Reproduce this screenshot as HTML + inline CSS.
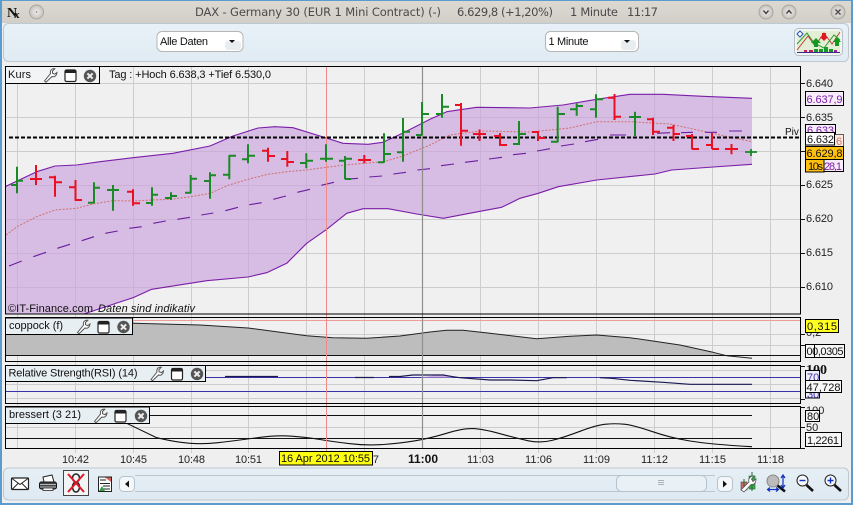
<!DOCTYPE html>
<html><head><meta charset="utf-8"><title>DAX</title>
<style>
html,body{margin:0;padding:0;width:853px;height:505px;overflow:hidden;background:#efefef}
svg{display:block}
text{font-family:"Liberation Sans",sans-serif;font-size:11px;fill:#111}
.t{font-family:"DejaVu Sans",sans-serif;font-size:11.5px;fill:#4a4a4a}
.a{font-size:11px;fill:#222}
</style></head><body>
<svg width="853" height="505" viewBox="0 0 853 505" xmlns="http://www.w3.org/2000/svg">
<defs>
<linearGradient id="tb" x1="0" y1="0" x2="0" y2="1"><stop offset="0" stop-color="#e8f1f8"/><stop offset="1" stop-color="#e0ebf3"/></linearGradient>
<linearGradient id="bb" x1="0" y1="0" x2="0" y2="1"><stop offset="0" stop-color="#e6eff6"/><stop offset="1" stop-color="#dfe9f1"/></linearGradient>
<linearGradient id="tt" x1="0" y1="0" x2="0" y2="1"><stop offset="0" stop-color="#dcd8d2"/><stop offset="1" stop-color="#d2cec8"/></linearGradient>
<radialGradient id="btn"><stop offset="0" stop-color="#eeeeee"/><stop offset="1" stop-color="#c6c2bc"/></radialGradient>
<clipPath id="c1"><rect x="6" y="66" width="794" height="248"/></clipPath>
<g id="wr"><path d="M-6 6L-4.500 7.200L1.500 1.500C3.800 2.300 6.200 .8 6.500-2.500L4.300-.8L2-1.800L2-4L4.300-6.300C1.300-6.800-.7-4.500 0-1.500Z" fill="#fff" stroke="#555" stroke-width="1"/></g>
<g id="wn"><rect x="-5.500" y="-5.500" width="11" height="11.500" rx="1.500" fill="#fff" stroke="#222" stroke-width="1.200"/><rect x="-5.500" y="-5.500" width="11" height="3" fill="#222"/></g>
<g id="cl"><circle r="6.200" fill="#555"/><path d="M-2.600-2.600L2.600 2.600M2.600-2.600L-2.600 2.600" stroke="#eee" stroke-width="2"/></g>
</defs>

<!-- window frame -->
<rect width="853" height="505" fill="#5a9bd0"/>
<rect x="2" y="1" width="849" height="502" fill="#efefef"/>
<rect x="2" y="1" width="849" height="22" fill="url(#tt)"/>
<text x="7" y="17" style="font-family:'Liberation Serif',serif;font-weight:bold;font-size:14px;fill:#111">N</text><text x="14" y="18" style="font-family:'Liberation Serif',serif;font-weight:bold;font-size:11px;fill:#111">x</text>
<circle cx="36.500" cy="12" r="7" fill="url(#btn)" stroke="#aaa6a0"/>
<circle cx="36.500" cy="12" r=".8" fill="#777"/>
<text class="t" x="195" y="16" textLength="246">DAX - Germany 30 (EUR 1 Mini Contract) (-)</text>
<text class="t" x="457" y="16" textLength="96">6.629,8 (+1,20%)</text>
<text class="t" x="570" y="16" textLength="48">1 Minute</text>
<text class="t" x="627" y="16" textLength="31">11:17</text>
<g fill="url(#btn)" stroke="#aaa6a0"><circle cx="766" cy="12" r="7"/><circle cx="789" cy="12" r="7"/><circle cx="838" cy="12" r="7"/></g>
<path d="M763.500 10.500L766 13.500L768.500 10.500M786.500 13.500L789 10.500L791.500 13.500M835.500 9.500L840.500 14.500M840.500 9.500L835.500 14.500" fill="none" stroke="#444" stroke-width="1.400"/>

<!-- top toolbar -->
<rect x="3.500" y="23.500" width="845" height="38" rx="5" fill="url(#tb)" stroke="#bcc8d2"/>
<rect x="157" y="31.500" width="86" height="20" rx="5" fill="#fff" stroke="#b6b6b6"/>
<rect x="225" y="41" width="16" height="9" rx="3" fill="#e8edf0"/>
<text x="160" y="45" textLength="48">Alle Daten</text>
<path d="M229 40H235L232 43Z" fill="#111"/>
<rect x="545.500" y="31.500" width="93" height="20" rx="5" fill="#fff" stroke="#b6b6b6"/>
<rect x="621" y="40" width="15" height="10" rx="3" fill="#e8edf0"/>
<text x="548.500" y="45" textLength="40">1 Minute</text>
<path d="M624 40H630L627 43Z" fill="#111"/>
<!-- strategy icon -->
<rect x="794.500" y="28.500" width="48" height="27" rx="4" fill="#f2f6f2" stroke="#b4bec4"/>
<rect x="797" y="31" width="43" height="21" fill="#dcedc8" opacity=".7"/>
<path d="M797 50L808 36L815 46L824 33L832 44L840 32" fill="none" stroke="#c8403a" stroke-width="1"/>
<path d="M797 44L807 33L814 43L824 48L834 35L840 40" fill="none" stroke="#2e9a2e" stroke-width="1"/>
<path d="M800 31L803 34L800 37L797 34Z" fill="#fff" stroke="#2a50c0"/>
<path d="M814 47H818V43H821L816 38L811 43H814ZM835 46H839V42H841L837 37L833 42H835Z" fill="#129a20"/>
<path d="M822 33H826V37H828L824 41L820 37H822Z" fill="#e01820"/>
<path d="M797 52.500H840" stroke="#3a2a90" stroke-width="1"/>
<path d="M804 50h3v2h-3zM809 50h4v2h-4z" fill="#d02060"/><path d="M814 49h4v3h-4zM819 49h4v3h-4zM824 47h4v5h-4z" fill="#189a28"/><path d="M829 49h4v3h-4z" fill="#189a28"/><path d="M834 50h3v2h-3z" fill="#a020a0"/>

<!-- chart backgrounds -->
<rect x="5.500" y="66.500" width="795" height="248" fill="#f0f0f0"/>
<rect x="5.500" y="317.500" width="795" height="44" fill="#f0f0f0"/>
<rect x="5.500" y="365.500" width="795" height="38" fill="#f0f0f0"/>
<rect x="5.500" y="407" width="795" height="41" fill="#f0f0f0"/>

<!-- grids -->
<path d="M6 83.500H800M6 117.500H800M6 151.500H800M6 185.500H800M6 219.500H800M6 253.500H800M6 287.500H800M6 334.500H800M6 345.500H800M6 370.500H800M6 384.500H800M6 398.500H800M6 427.500H800" stroke="#cdcdcd" stroke-width="1" fill="none"/>
<path d="M17.500 66V448M75.500 66V453M133.500 66V453M191.500 66V453M248.500 66V453M306.500 66V453M364.500 66V453M480.500 66V453M538.500 66V453M596.500 66V453M654.500 66V453M712.500 66V453M770.500 66V453" stroke="#cdcdcd" stroke-width="1" fill="none"/>

<!-- band -->
<g clip-path="url(#c1)">
<path d="M5 186.700L36.700 171.700L55 166L76.700 165L100 161.700L133 157.700L173 153.300L210 146L233 136L258 128L275 126.700L293 127.700L320 136L343 143.300L368 144.300L383 142.300L403 133L430 119.300L446.700 111.700L476.700 107.300L530 108L563 105L596.700 99.300L630 94.300L663 94.300L703 96.300L752 98.300L752 164.300L713.300 167L671.700 170L655 174L596.700 180L558.300 186.700L538.300 193.300L520 198.300L501.700 207.300L480 211.300L443.300 218.300L416.700 214L388 208.700L363.300 208.700L346.700 213.300L326.700 229.300L306.700 243.300L286.700 263.300L266.700 272.700L248 277L206.700 280.700L190 283.300L151.700 289.300L133 297.700L86.700 313L70 320L5 320Z" fill="#c9a0dc" fill-opacity=".65"/>
<path d="M5 186.700L36.700 171.700L55 166L76.700 165L100 161.700L133 157.700L173 153.300L210 146L233 136L258 128L275 126.700L293 127.700L320 136L343 143.300L368 144.300L383 142.300L403 133L430 119.300L446.700 111.700L476.700 107.300L530 108L563 105L596.700 99.300L630 94.300L663 94.300L703 96.300L752 98.300" fill="none" stroke="#7a1ea8" stroke-width="1.100" stroke-linejoin="round"/>
<path d="M752 164.300L713.300 167L671.700 170L655 174L596.700 180L558.300 186.700L538.300 193.300L520 198.300L501.700 207.300L480 211.300L443.300 218.300L416.700 214L388 208.700L363.300 208.700L346.700 213.300L326.700 229.300L306.700 243.300L286.700 263.300L266.700 272.700L248 277L206.700 280.700L190 283.300L151.700 289.300L133 297.700L86.700 313L70 320" fill="none" stroke="#7a1ea8" stroke-width="1.100" stroke-linejoin="round"/>
<!-- red dotted MA -->
<path d="M6 235L17 226.700L36.700 216.700L55 210L76.700 208.300L93 204L113 200.700L133 201L152 200L171 199.300L190.700 196.700L210 193.300L229 185L248 179.300L268 174.300L287 171.700L306 170L326 167.300L345 165L364 163.300L384 161.700L403 156L430 145L450 135L480 131L530 132L570 128L596.700 121.700L630 121.700L670 124L693 129L720 135L752 141.700" fill="none" stroke="#d0706c" stroke-width="1" stroke-dasharray="2 1.500"/>
<!-- purple dashes -->
<path d="M9 266L21.700 261M33.300 256.700L46 252.300M57.300 248.300L70 244.300M81.700 240.700L94 236.700M105.300 233.300L117.700 231M129.300 228.300L141.700 226.700M153.300 223.300L165.700 221M177.300 219.300L190 217.300M201.300 215L213.300 213M225.300 210.700L238 207.300M249.300 204.700L261.700 202.700M273.300 199.300L286 196M297.300 192.300L310 189.300M321.300 185.300L334 182.300M345.300 179.300L358 178.300M369.300 177L382 176M393.300 174L406 172.300M417.300 170L430 168.700M441 165.700L454 164M465 162.300L478 160.700M489 159L502 157.300M513 154.700L526 153.300M537 151L550 148.700M561 146L574 144M585 141.700L598 139.300M610 135L626 135M657 133.300L670 132.700M681 132.700L693 132.300M705 132.300L717 132.300M729 131L742 131" fill="none" stroke="#6a1ea0" stroke-width="1.100"/>
</g>

<!-- coppock fill -->
<path d="M6 321L133 323.300L200 325L248 328L306.700 335.700L333 337.700L366.700 338.300L400 336L430 332L446.700 330.300L463 330.300L490 333.300L536.700 338.700L570 336.300L596.700 335L630 337.700L680 345L713 352.300L726.700 355.700L6 355.700Z" fill="#bdbdbd"/>
<path d="M133 323.300L200 325L248 328L306.700 335.700L333 337.700L366.700 338.300L400 336L430 332L446.700 330.300L463 330.300L490 333.300L536.700 338.700L570 336.300L596.700 335L630 337.700L680 345L713 352.300L726.700 355.700L752 358.300" fill="none" stroke="#222" stroke-width="1" stroke-linejoin="round"/>
<path d="M6 320.500H800" stroke="#f09a9a" stroke-width="1"/>
<path d="M6 355.500H800" stroke="#111" stroke-width="1"/>

<!-- RSI -->
<path d="M6 377.500H800M6 391.500H800" stroke="#3a32a8" stroke-width="1"/>
<path d="M420 377.500L443 374.300L453 377.500Z" fill="#d0b0e0" stroke="none"/>
<path d="M225 376.500H278M355 377.500H374M389 376.500H400L413 375H443L453 376.700L460 377.700L490 380L510 380L536.700 380.700L553 377.700L566.700 377.700M600 377.700L611.700 378.300L630 380.300L663 382.300L690 384.300L752 384.300" fill="none" stroke="#1a1a50" stroke-width="1.200" stroke-linejoin="round"/>

<!-- bressert -->
<path d="M150 415.500H752M6 438.500H752" stroke="#111" stroke-width="1"/>
<path d="M126.700 423.300L156.700 437.700Q176.700 442.300 190 443.300Q203 444.300 218 442.700Q233 441 255 438Q276.700 435 291.700 436.200Q306.700 437.300 320 439.500Q333 441.700 350 443.700Q366.700 445.700 383.300 444.500Q400 443.300 415 440.800Q430 438.300 446.500 433.300Q463 428.300 473 428.600Q483 429 500 433.700Q516.700 438.300 528.300 440.800Q540 443.300 551.500 440.500Q563 437.700 580 431.300Q596.700 425 606 424.200Q615 423.300 624 424.200Q633 425 651.500 431.300Q670 437.700 690 441Q710 444.300 752 446.700" fill="none" stroke="#111" stroke-width="1.100"/>

<!-- crosshair verticals -->
<path d="M326.500 66V452" stroke="#ee8a8a" stroke-width="1"/>
<path d="M422.500 66V448" stroke="#8e8e8e" stroke-width="1.200"/>

<!-- pivot -->
<path d="M9 137.500H800" stroke="#000" stroke-width="2" stroke-dasharray="4 2"/>
<text x="785" y="135" style="font-size:10px">Piv</text>

<!-- bars green -->
<path d="M17 166.700V193.300M11 185H17M17 180.700H23M94 182.300V203.300M88 202.700H94M94 187.700H100M113 185V210.700M107 190H119M152 187.300V205.700M146 203H152M152 194.700H158M171 192.300V200M165 198H171M171 196H177M190.700 175V193.300M185 192.700H191M191 178.700H197M210 172.300V198.700M204 181H210M210 175.300H216M229.300 155.300V179.300M223 174.700H229M229 155.700H236M248 144.300V163.300M242 159.300H248M248 155.700H255M306.300 153.300V168.300M300 163H306M306 160.700H313M326 144.300V161.700M320 158.700H333M345 156V179.300M339 160.700H345M345 158.700H352M345 179H351M384 133.300V162.700M378 162.300H384M384 154H391M403 118V161.700M397 152.300H403M403 131.700H410M422 102V135M416 135H422M422 114H429M442 94V117.700M436 114H442M442 106.700H449M519 121V145M513 144H519M519 134H526M557.700 106.700V142.300M551 141.700H558M558 114H565M576.700 103.300V115.700M570 109.300H577M577 106H583M596 94.300V117.700M590 109.300H596M596 99.300H603M635 111.700V136M629 117H641" fill="none" stroke="#1a8a26" stroke-width="2"/>
<path d="M751 149V156M745 152H757" fill="none" stroke="#1a8a26" stroke-width="1.800"/>
<!-- bars red -->
<path d="M36 165V185M30 179H42M55 175.700V196.700M49 177.300H55M55 182.300H62M75.500 180V200.700M69 187.300H75M75 200H82M133 189.300V205.700M127 191.700H133M133 203.300H140M268 147.700V161.700M262 150.700H268M268 156H275M287.300 151V166.700M281 159H287M287 162H294M364.300 155V163.300M358 160H371M461 103V145.700M455 105H461M461 130.700H468M479.500 129.500V141M473 134H486M500 133V146M494 136H500M500 145H507M538 131V141M532 132H538M538 138H545M614.500 94V120M608 97.700H615M615 116.700H621M653 117.700V135M647 119.300H653M653 131.700H660M673.500 125V141M667 127.700H674M674 134H680M692 134V149.300M686 136H692M692 149H699M712 133V149M706 145H712M712 149H719M731.500 144V154.300M725 149H738" fill="none" stroke="#ea1022" stroke-width="2"/>

<!-- panel borders -->
<g fill="none" stroke="#000" stroke-width="1">
<rect x="5.500" y="66.500" width="795" height="247.500"/>
<rect x="5.500" y="317.500" width="795" height="44"/>
<rect x="5.500" y="365.500" width="795" height="38"/>
<rect x="5.500" y="406.500" width="795" height="42"/>
</g>

<!-- axis ticks -->
<path d="M800 83.500H805M800 117.500H805M800 151.500H805M800 185.500H805M800 219.500H805M800 253.500H805M800 287.500H805M800 334.500H805M800 345.500H805M800 366.500H805M800 399.500H805M800 407.500H805M800 427.500H805M800 448.500H805" stroke="#111" stroke-width="1"/>

<!-- legends -->
<rect x="5.500" y="66.500" width="94" height="17" fill="#f2f4f5" stroke="#000"/>
<text x="8" y="78" textLength="23">Kurs</text>
<use href="#wr" x="50.500" y="75"/><use href="#wn" x="70.500" y="75.500"/><use href="#cl" x="90" y="76"/>
<text x="109" y="78" textLength="162">Tag : +Hoch 6.638,3 +Tief 6.530,0</text>

<rect x="5.500" y="318" width="127" height="16.500" fill="#e8eff3" stroke="#000"/>
<text x="9" y="329" textLength="54">coppock (f)</text>
<use href="#wr" x="83.500" y="326.500"/><use href="#wn" x="103.500" y="327"/><use href="#cl" x="123.500" y="327"/>

<rect x="5.500" y="365.500" width="200" height="16" fill="#e8eff3" stroke="#000"/>
<text x="8.500" y="376.500" textLength="129">Relative Strength(RSI) (14)</text>
<use href="#wr" x="157" y="373.500"/><use href="#wn" x="177" y="374"/><use href="#cl" x="197" y="374"/>

<rect x="5.500" y="407" width="144" height="16.500" fill="#e8eff3" stroke="#000"/>
<text x="9" y="418" textLength="72">bressert (3 21)</text>
<use href="#wr" x="100.500" y="415.500"/><use href="#wn" x="120.500" y="416"/><use href="#cl" x="141" y="416"/>

<text x="8" y="312" textLength="85">©IT-Finance.com</text>
<text x="98" y="312" style="font-style:italic" textLength="97">Daten sind indikativ</text>

<!-- price axis labels -->
<text class="a" x="806" y="87" textLength="27">6.640</text>
<text class="a" x="806" y="121" textLength="27">6.635</text>
<text class="a" x="806" y="188" textLength="27">6.625</text>
<text class="a" x="806" y="222" textLength="27">6.620</text>
<text class="a" x="806" y="256" textLength="27">6.615</text>
<text class="a" x="806" y="290" textLength="27">6.610</text>
<rect x="805.500" y="91.500" width="38" height="14" fill="#f8ecfb" stroke="#000"/>
<text x="806.500" y="103" style="fill:#7a1ea8" textLength="36">6.637,9</text>
<rect x="805.500" y="124.500" width="30" height="10" fill="#f8ecfb" stroke="#000"/>
<text x="807" y="134" style="fill:#7a1ea8" textLength="27">6.633</text>
<rect x="805.500" y="134.500" width="38" height="12" fill="#fbe8e0" stroke="#000" stroke-width=".6"/>
<text x="836" y="145" style="fill:#d87868">6</text>
<rect x="805.500" y="132.500" width="29" height="12.500" fill="#fff" stroke="#000"/>
<text x="807" y="143" textLength="27">6.632</text>
<rect x="805.500" y="159.500" width="38" height="12" fill="#f8ecfb" stroke="#000"/>
<text x="824" y="170" style="fill:#7a1ea8" textLength="18">28,1</text>
<rect x="805.500" y="146.500" width="38" height="13" fill="#ffc010" stroke="#000"/>
<text x="806.500" y="157" textLength="36">6.629,8</text>
<rect x="805.500" y="159.500" width="18.500" height="12.500" fill="#ffc010" stroke="#000"/>
<text x="808" y="170" textLength="15">10s</text>

<text x="806" y="336" class="a">0,2</text>
<rect x="805.500" y="319.500" width="33" height="13" fill="#ffff20" stroke="#000"/>
<text x="807" y="330" textLength="30">0,315</text>
<rect x="805.500" y="344.500" width="39" height="13" fill="#f6f6f6" stroke="#000"/>
<text x="806.500" y="355" textLength="37">00,0305</text>
<path d="M814.500 345V357" stroke="#000"/>

<text x="806" y="374" style="font-family:'Liberation Serif',serif;font-weight:bold;font-size:14px;fill:#111">100</text>
<rect x="805.500" y="370.500" width="14" height="12" fill="#f0ecf8" stroke="#000"/>
<text x="807" y="381" style="fill:#3a32a8">70</text>
<rect x="805.500" y="390" width="14" height="8" fill="#f0ecf8" stroke="#000"/>
<text x="807" y="398" style="fill:#3a32a8">30</text>
<rect x="805.500" y="380.500" width="36" height="12" fill="#f8f8f8" stroke="#000"/>
<text x="806.500" y="391" textLength="34">47,728</text>

<text x="806" y="414" class="a">100</text>
<rect x="805.500" y="410.500" width="14" height="11" fill="#f6f6f6" stroke="#000"/>
<text x="807" y="420">80</text>
<text x="806" y="431" class="a">50</text>
<rect x="805.500" y="432.500" width="36" height="14" fill="#f6f6f6" stroke="#000"/>
<text x="807" y="444" textLength="32">1,2261</text>

<!-- time axis -->
<text class="a" x="62" y="463" textLength="27">10:42</text>
<text class="a" x="120" y="463" textLength="27">10:45</text>
<text class="a" x="178" y="463" textLength="27">10:48</text>
<text class="a" x="235" y="463" textLength="27">10:51</text>
<text class="a" x="352" y="463" textLength="27">10:57</text>
<text x="408" y="463" style="font-size:12px;font-weight:bold" textLength="30">11:00</text>
<text class="a" x="467" y="463" textLength="27">11:03</text>
<text class="a" x="525" y="463" textLength="27">11:06</text>
<text class="a" x="583" y="463" textLength="27">11:09</text>
<text class="a" x="641" y="463" textLength="27">11:12</text>
<text class="a" x="699" y="463" textLength="27">11:15</text>
<text class="a" x="757" y="463" textLength="27">11:18</text>
<rect x="279.500" y="451.500" width="93" height="13.500" fill="#ffff10" stroke="#000"/>
<text x="281" y="462" textLength="89">16 Apr 2012 10:55</text>

<!-- bottom toolbar -->
<rect x="3.500" y="468" width="845" height="32" rx="5" fill="url(#bb)" stroke="#bcc8d2"/>
<!-- envelope -->
<rect x="11.500" y="478" width="17" height="11.500" rx="1" fill="#fff" stroke="#222" stroke-width="1.200"/>
<path d="M12 478.500L20 484.500L28 478.500M12 489.500L18 483.500M28 489.500L22 483.500" fill="none" stroke="#222"/>
<!-- printer -->
<path d="M43 477L52 475L54 482H44Z" fill="#fff" stroke="#222"/>
<rect x="39.500" y="482" width="17" height="7" rx="2" fill="#444" stroke="#111"/>
<path d="M40 484.500H56M40 487H56" stroke="#ddd" stroke-width=".8"/>
<rect x="43" y="488" width="10" height="2.500" fill="#fff" stroke="#222" stroke-width=".8"/>
<!-- disabled -->
<rect x="63.500" y="470.500" width="25" height="25" fill="#f2f4f5" stroke="#444"/>
<ellipse cx="76" cy="478" rx="3.500" ry="4" fill="none" stroke="#222" stroke-width="1.500"/><ellipse cx="76" cy="487" rx="3.500" ry="5" fill="none" stroke="#222" stroke-width="1.500"/>
<path d="M68 474L84 492M84 474L68 492" stroke="#e01828" stroke-width="2"/>
<!-- doc -->
<rect x="98.500" y="477" width="13" height="14.500" fill="#fff" stroke="#222"/>
<path d="M100 480H106M100 483.500H110M103 486H110M103 489H110" stroke="#222"/>
<path d="M105 477.500H111V482Z" fill="#d06060"/><path d="M99 491H105L102 486Z" fill="#30a050"/>
<!-- scrollbar -->
<rect x="119.500" y="476.500" width="15" height="15" rx="4" fill="#f4f7fa" stroke="#b6c2cc"/>
<path d="M129 480.500V487.500L125 484Z" fill="#111"/>
<path d="M135 475.500H715M135 491.500H715" stroke="#bcc6ce"/>
<rect x="616.500" y="475.500" width="90" height="16" rx="5" fill="#e9f1f7" stroke="#b6c2cc"/>
<path d="M658 480.500H664M658 482.500H664M658 484.500H664" stroke="#a8b2ba"/>
<rect x="717.500" y="476.500" width="15" height="15" rx="4" fill="#f4f7fa" stroke="#b6c2cc"/>
<path d="M723 480.500V487.500L727 484Z" fill="#111"/>
<!-- wrench candle -->
<rect x="741" y="482" width="6" height="8" fill="#d06868" stroke="#444" stroke-width=".6"/>
<rect x="749" y="476" width="6" height="13" fill="#3aa84a" stroke="#1a6a2a" stroke-width=".6"/>
<path d="M744 479V492M752 472V491" stroke="#1a6a2a"/>
<path d="M741 490L749 482C748 479 750 476 754 476L751.500 479L753 481.500L756 479C756 483 754 485 751 484.500L744 492Z" fill="#fff" stroke="#555" stroke-width=".8"/>
<!-- zoom fit -->
<circle cx="773" cy="481" r="6" fill="#bbb" stroke="#888"/>
<path d="M777.500 485.500L785 491.500" stroke="#111" stroke-width="2.600"/>
<path d="M783 476V487M781 478L783 475L785 478M781 485L783 488L785 485M768 489.500H778M770 487.500L767.500 489.500L770 491.500M776 487.500L778.500 489.500L776 491.500" fill="none" stroke="#1030c0" stroke-width="1.200"/>
<!-- minus -->
<circle cx="802.500" cy="480.500" r="5.500" fill="#f6f8fa" stroke="#222"/>
<path d="M799.500 480.500H805.500" stroke="#1030c0" stroke-width="1.400"/>
<path d="M806.500 485L813 491" stroke="#111" stroke-width="2.600"/>
<!-- plus -->
<circle cx="830.500" cy="480.500" r="5.500" fill="#f6f8fa" stroke="#222"/>
<path d="M827.500 480.500H833.500M830.500 477.500V483.500" stroke="#1030c0" stroke-width="1.400"/>
<path d="M834.500 485L841 491" stroke="#111" stroke-width="2.600"/>
</svg>
</body></html>
